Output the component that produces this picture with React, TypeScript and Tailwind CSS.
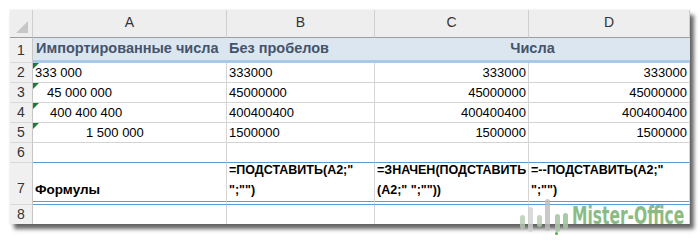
import React from "react";

const GRID = "border-[#d4d4d4]";

function Tri() {
  return (
    <span className="absolute left-0 top-0 w-0 h-0 border-t-[6px] border-t-[#1e7b34] border-r-[6px] border-r-transparent" />
  );
}

function RowHead({ n, h, extra = "" }: { n: string; h: string; extra?: string }) {
  return (
    <div
      className={`${h} bg-[#f0f0f0] border-r border-b border-r-[#c6c6c6] border-b-[#d8d8d8] flex items-center justify-center text-[14px] text-[#333] ${extra}`}
    >
      {n}
    </div>
  );
}

function Cell({
  children,
  h,
  cls = "",
}: {
  children?: React.ReactNode;
  h: string;
  cls?: string;
}) {
  return (
    <div className={`relative ${h} border-r border-b ${GRID} flex items-center px-[2px] whitespace-nowrap overflow-hidden text-[13px] text-black ${cls}`}>
      {children}
    </div>
  );
}

export default function App() {
  const rows = [
    { n: "2", a: "333 000", pa: "pl-[2px]", v: "333000" },
    { n: "3", a: "45 000 000", pa: "pl-[14px]", v: "45000000" },
    { n: "4", a: "400 400 400", pa: "pl-[17px]", v: "400400400" },
    { n: "5", a: "1 500 000", pa: "pl-[53px]", v: "1500000" },
  ];
  return (
    <div
      className="relative w-[700px] h-[244px] bg-white overflow-hidden"
      style={{ fontFamily: '"Liberation Sans", Arial, sans-serif' }}
    >
      <div className="absolute left-[10px] top-[10px] w-[680px] h-[214px] bg-white overflow-hidden shadow-[4px_5px_4px_rgba(0,0,0,0.6),0_0_2px_rgba(0,0,0,0.12)]">
        <div className="grid grid-cols-[23px_194px_148px_154px_161px]">
          {/* header row */}
          <div className="relative h-[28px] bg-[#eeeeee] border-r border-b border-r-[#cfcfcf] border-b-[#9e9e9e]">
            <span className="absolute right-[4px] bottom-[4px] w-0 h-0 border-l-[12px] border-l-transparent border-b-[12px] border-b-[#c7c7c7]" />
          </div>
          {["A", "B", "C", "D"].map((c) => (
            <div
              key={c}
              className="h-[28px] bg-[#eeeeee] border-r border-b border-r-[#cfcfcf] border-b-[#9e9e9e] flex items-end justify-center pb-[4px] text-[14px] text-[#333]"
            >
              {c}
            </div>
          ))}

          {/* row 1 */}
          <RowHead n="1" h="h-[25px]" />
          <div className="h-[25px] bg-[#dce6f1] border-b-[3px] border-[#a8c9ea] flex items-center pl-[3px] text-[14.5px] font-bold text-[#44546a] whitespace-nowrap">
            Импортированные числа
          </div>
          <div className="h-[25px] bg-[#dce6f1] border-b-[3px] border-[#a8c9ea] flex items-center pl-[2px] text-[14.5px] font-bold text-[#44546a] whitespace-nowrap">
            Без пробелов
          </div>
          <div className="col-span-2 h-[25px] bg-[#dce6f1] border-b-[3px] border-[#a8c9ea] flex items-center justify-center text-[14.5px] font-bold text-[#44546a]">
            Числа
          </div>

          {rows.map((r) => (
            <React.Fragment key={r.n}>
              <RowHead n={r.n} h="h-[20px]" />
              <Cell h="h-[20px]" cls={r.pa}>
                <Tri />
                {r.a}
              </Cell>
              <Cell h="h-[20px]">{r.v}</Cell>
              <Cell h="h-[20px]" cls="justify-end">{r.v}</Cell>
              <Cell h="h-[20px]" cls="justify-end">{r.v}</Cell>
            </React.Fragment>
          ))}

          {/* row 6 */}
          <RowHead n="6" h="h-[20px]" />
          <Cell h="h-[20px]" cls="border-b-[#5b9bd5]" />
          <Cell h="h-[20px]" cls="border-b-[#5b9bd5]" />
          <Cell h="h-[20px]" cls="border-b-[#5b9bd5]" />
          <Cell h="h-[20px]" cls="border-b-[#5b9bd5]" />

          {/* row 7 */}
          <RowHead n="7" h="h-[42px]" extra="items-end pb-[5px]" />
          {[
            ["", "Формулы"],
            ['=ПОДСТАВИТЬ(A2;"', '";"")'],
            ["=ЗНАЧЕН(ПОДСТАВИТЬ", '(A2;" ";""))'],
            ['=--ПОДСТАВИТЬ(A2;"', '";"")'],
          ].map(([l1, l2], i) => (
            <div
              key={i}
              className={`h-[42px] border-r border-r-[#d4d4d4] border-b-4 border-double border-b-[#5b9bd5] flex flex-col justify-end px-[2px] pb-[1px] font-bold text-black leading-[20px] whitespace-nowrap overflow-hidden ${i === 0 ? "text-[13.5px]" : "text-[12.5px]"}`}
            >
              {l1 && <span>{l1}</span>}
              <span>{l2}</span>
            </div>
          ))}

          {/* row 8 */}
          <RowHead n="8" h="h-[20px]" />
          <Cell h="h-[20px]" />
          <Cell h="h-[20px]" />
          <Cell h="h-[20px]" />
          <Cell h="h-[20px]" />
        </div>
      </div>

      {/* watermark */}
      <div className="absolute left-[519px] top-[199px] h-[36px] w-[170px]">
        <span className="absolute left-[1px] top-[16px] w-[5px] h-[14px] rounded-full bg-[#b5c9b2] opacity-80" />
        <span className="absolute left-[9px] top-[8px] w-[5px] h-[25px] rounded-full bg-[#cfd1cf] opacity-80" />
        <span className="absolute left-[18px] top-[16px] w-[5px] h-[12px] rounded-full bg-[#b5c9b2] opacity-80" />
        <span className="absolute left-[26px] top-[0px] w-[5px] h-[32px] rounded-full bg-[#b9bdb9] opacity-80" />
        <span className="absolute left-[36px] top-[15px] w-[5px] h-[18px] rounded-full bg-[#a9c7a4] opacity-90" />
        <span className="absolute left-[36px] top-[33px] w-[3px] h-[3px] rounded-full bg-[#4caf50]" />
        <span className="absolute left-[44px] top-[14px] w-[5px] h-[16px] rounded-full bg-[#9fc49a] opacity-90" />
        <span
          className="absolute left-[53px] top-[4px] text-[25px] font-bold text-[#8bbb84] leading-none origin-left scale-x-[0.69] whitespace-nowrap"
          style={{ fontFamily: '"DejaVu Sans Condensed", "DejaVu Sans", sans-serif' }}
        >
          Mister-Office
        </span>
      </div>
    </div>
  );
}
